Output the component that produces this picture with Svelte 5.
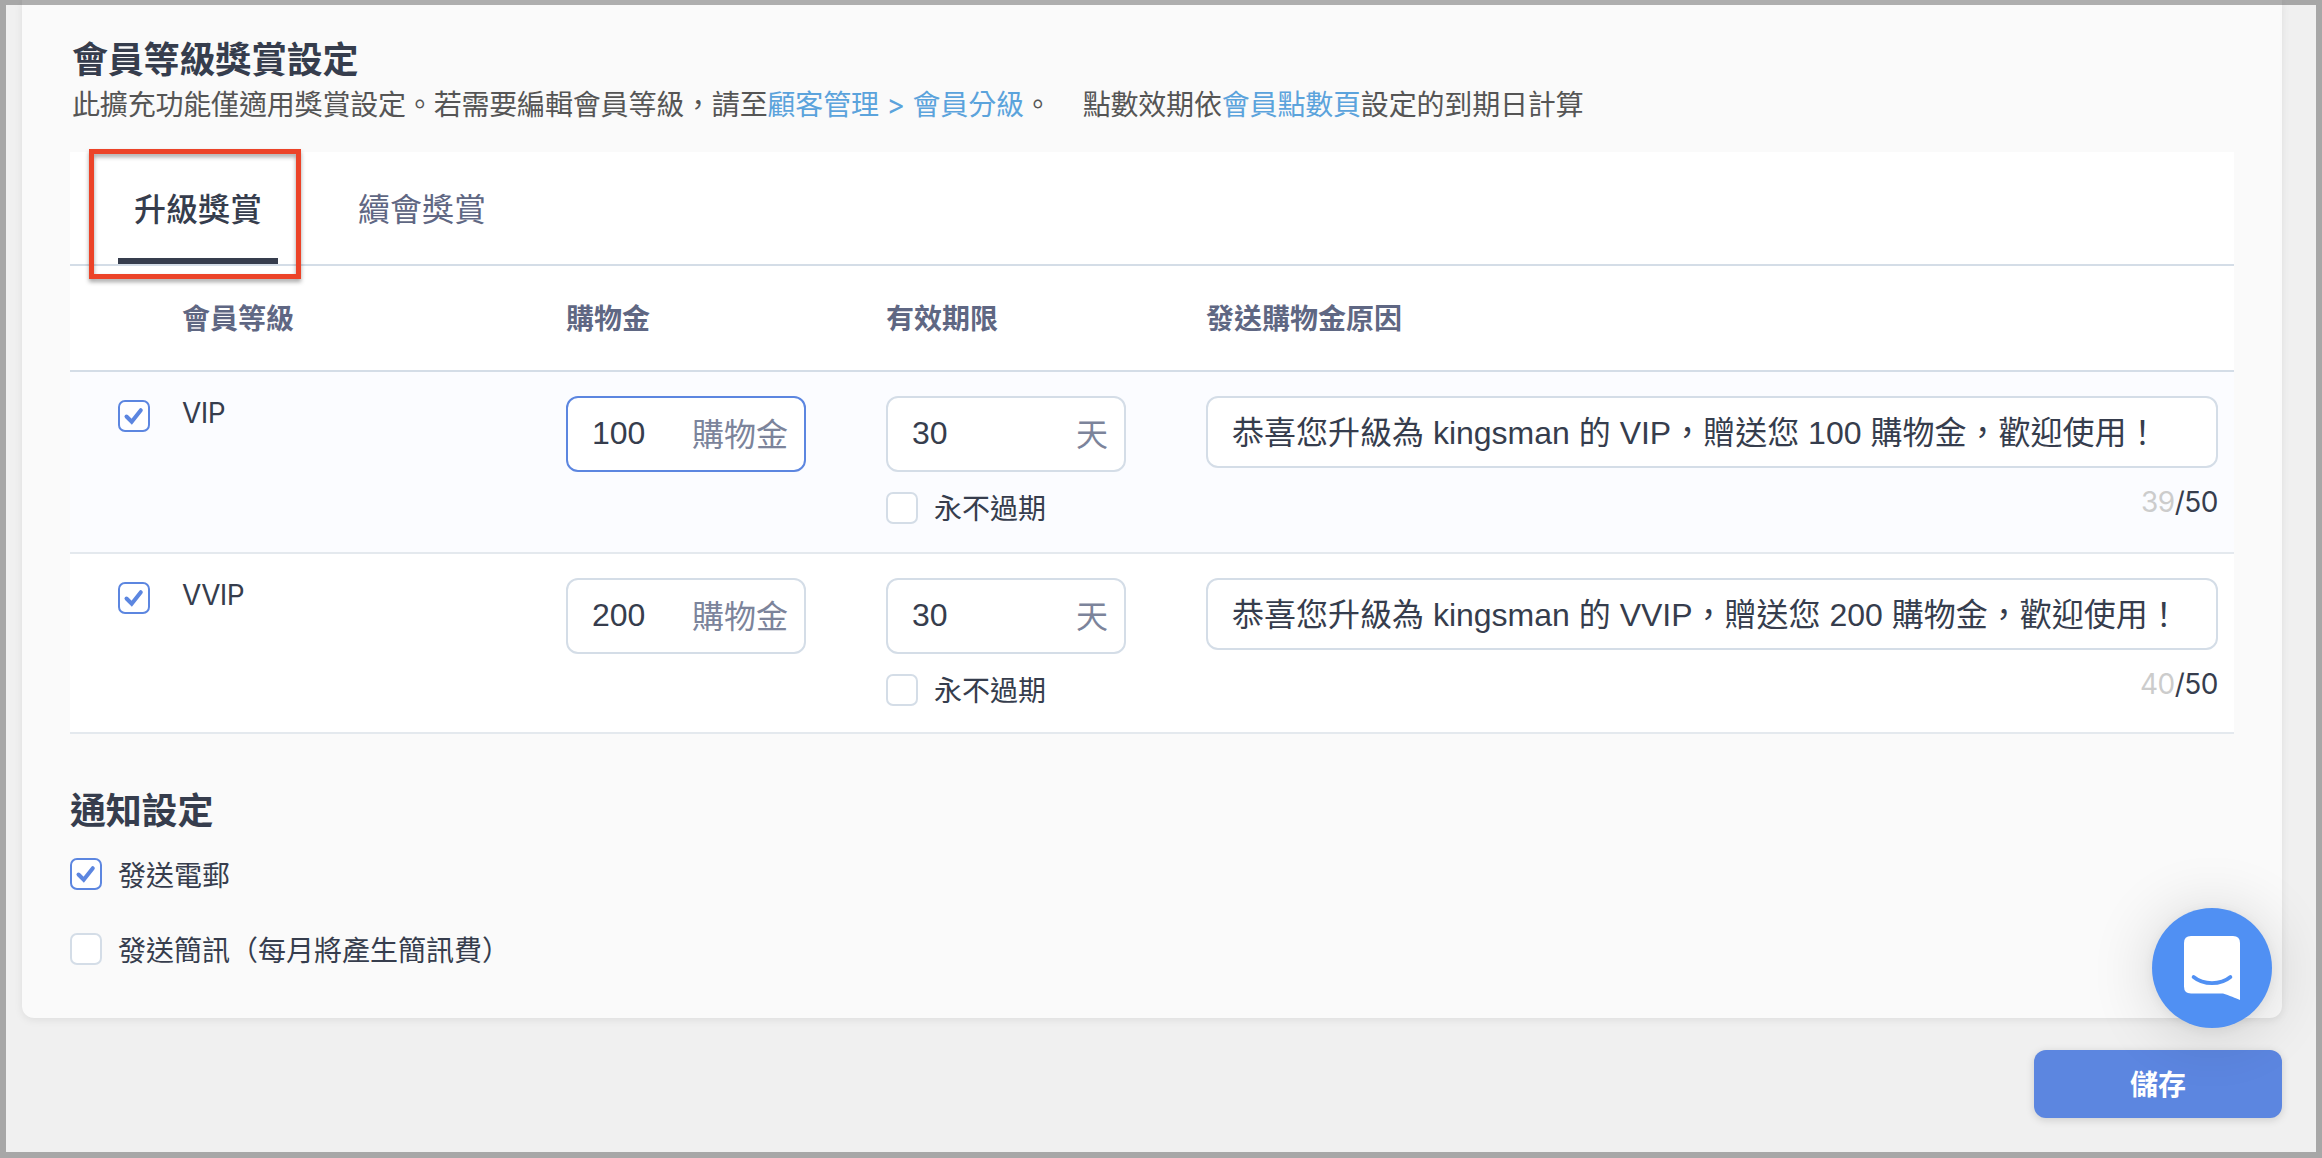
<script lang="ts">
	let activeTab = 'upgrade';

	const tabs = [
		{ id: 'upgrade', label: '升級獎賞' },
		{ id: 'renew', label: '續會獎賞' }
	];

	let levels = [
		{
			name: 'VIP',
			enabled: true,
			credit: '100',
			days: '30',
			neverExpire: false,
			reason: '恭喜您升級為 kingsman 的 VIP，贈送您 100 購物金，歡迎使用！',
			count: 39,
			active: true
		},
		{
			name: 'VVIP',
			enabled: true,
			credit: '200',
			days: '30',
			neverExpire: false,
			reason: '恭喜您升級為 kingsman 的 VVIP，贈送您 200 購物金，歡迎使用！',
			count: 40,
			active: false
		}
	];

	let notifications = [
		{ label: '發送電郵', checked: true },
		{ label: '發送簡訊（每月將產生簡訊費）', checked: false }
	];
</script>

<div class="page">
	<section class="panel">
		<h2>會員等級獎賞設定</h2>
		<p class="desc">
			此擴充功能僅適用獎賞設定。若需要編輯會員等級，請至<a href="#members">顧客管理 &gt; 會員分級</a>。<span class="note">點數效期依<a href="#points">會員點數頁</a>設定的到期日計算</span>
		</p>

		<div class="table">
			<div class="tabs">
				{#each tabs as tab}
					<button class="tab" class:active={activeTab === tab.id} on:click={() => (activeTab = tab.id)}>
						{tab.label}
					</button>
				{/each}
				<div class="highlight"></div>
			</div>

			<div class="row head">
				<div></div>
				<div>會員等級</div>
				<div>購物金</div>
				<div>有效期限</div>
				<div>發送購物金原因</div>
			</div>

			{#each levels as level}
				<div class="row level" class:current={level.active}>
					<label class="check first">
						<input type="checkbox" bind:checked={level.enabled} />
						<span class="box">
							{#if level.enabled}
								<svg viewBox="0 0 32 32"><path d="M8.5 16.5L13.7 21.7L22.8 10.2" /></svg>
							{/if}
						</span>
					</label>
					<div class="name">{level.name}</div>
					<div>
						<div class="field" class:focused={level.active}>
							<input type="text" bind:value={level.credit} />
							<span class="unit">購物金</span>
						</div>
					</div>
					<div>
						<div class="field">
							<input type="text" bind:value={level.days} />
							<span class="unit">天</span>
						</div>
						<label class="check never">
							<input type="checkbox" bind:checked={level.neverExpire} />
							<span class="box">
								{#if level.neverExpire}
									<svg viewBox="0 0 32 32"><path d="M8.5 16.5L13.7 21.7L22.8 10.2" /></svg>
								{/if}
							</span>
							<span class="label">永不過期</span>
						</label>
					</div>
					<div>
						<div class="field reason">
							<input type="text" bind:value={level.reason} />
						</div>
						<div class="counter"><span>{level.count}</span>/50</div>
					</div>
				</div>
			{/each}
		</div>

		<h2 class="notify-title">通知設定</h2>
		<div class="notify">
			{#each notifications as item}
				<label class="check">
					<input type="checkbox" bind:checked={item.checked} />
					<span class="box">
						{#if item.checked}
							<svg viewBox="0 0 32 32"><path d="M8.5 16.5L13.7 21.7L22.8 10.2" /></svg>
						{/if}
					</span>
					<span>{item.label}</span>
				</label>
			{/each}
		</div>
	</section>

	<div class="actions">
		<button class="save">儲存</button>
	</div>

	<button class="chat" aria-label="chat">
		<svg viewBox="0 0 56 64">
			<path d="M7 0H49Q56 0 56 7V64C52 62.3 45 59.5 39 57.5H7Q0 57.5 0 50.5V7Q0 0 7 0Z" fill="#fff" />
			<path d="M9.6 41C19.5 49.2 36.5 49.2 46.4 41" fill="none" stroke="#5090f3" stroke-width="3.8" stroke-linecap="round" />
		</svg>
	</button>

	<div class="frame"></div>
</div>

<style>
	:global(body) {
		background: #f0f0f0;
	}

	.page {
		position: relative;
		box-sizing: border-box;
		width: 2322px;
		height: 1158px;
		padding: 0 40px 0 22px;
		overflow: hidden;
		background: #f0f0f0;
		color: #363d4d;
		font-family: Inter, 'Noto Sans CJK TC', sans-serif;
		font-size: 28px;
	}

	.page * {
		box-sizing: border-box;
	}

	/* Dark edge lying over the whole page */
	.frame {
		position: absolute;
		inset: 0;
		border: 6px solid rgba(0, 0, 0, 0.3);
		border-top-width: 5px;
		pointer-events: none;
	}

	.panel {
		height: 1018px;
		padding: 37px 48px 0;
		background: #fafafa;
		border-radius: 0 0 12px 12px;
		box-shadow: 0 2px 8px rgba(0, 0, 0, 0.08);
	}

	h2 {
		margin: 0 0 0 2px;
		font-size: 36px;
		line-height: 46px;
		font-weight: 600;
		letter-spacing: -0.2px;
	}

	.desc {
		margin: 2px 0 0 2px;
		height: 67px;
		line-height: 40px;
		color: #555;
		letter-spacing: -0.18px;
		white-space: nowrap;
	}

	.desc a {
		color: #5ba3dc;
		text-decoration: none;
	}

	.note {
		margin-left: 31px;
	}

	.table {
		width: 2164px;
		background: #fff;
	}

	.tabs {
		position: relative;
		display: flex;
		gap: 64px;
		height: 114px;
		padding-left: 48px;
		border-bottom: 2px solid #d4dde7;
	}

	.tab {
		width: 160px;
		padding: 3px 0 0;
		border: none;
		border-bottom: 6px solid transparent;
		background: none;
		color: #5f6783;
		font-family: inherit;
		font-size: 32px;
		white-space: nowrap;
		cursor: pointer;
	}

	.tab.active {
		color: #363d4d;
		border-bottom-color: #363d4d;
		font-weight: 500;
	}

	.highlight {
		position: absolute;
		left: 19px;
		top: -3px;
		width: 212px;
		height: 130px;
		border: 5px solid #ec4328;
		filter: drop-shadow(0 3px 2px rgba(0, 0, 0, 0.35));
		pointer-events: none;
	}

	.row {
		display: grid;
		grid-template-columns: 64px 384px 320px 320px 1012px;
		padding-left: 48px;
	}

	.head {
		height: 106px;
		padding-bottom: 3px;
		align-items: center;
		border-bottom: 2px solid #d4dde7;
		color: #5f6783;
		font-weight: 600;
	}

	.level {
		height: 180px;
		padding-top: 24px;
		border-bottom: 2px solid #e4e9ee;
	}

	.level.current {
		height: 182px;
		background: #fbfcff;
	}

	.name {
		line-height: 34px;
		letter-spacing: -0.6px;
	}

	.field {
		display: flex;
		align-items: center;
		width: 240px;
		height: 76px;
		padding: 0 16px 0 24px;
		border: 2px solid #d4dde7;
		border-radius: 12px;
		background: #fff;
	}

	.field.focused {
		border-color: #5c86e0;
	}

	.field input {
		flex: 1;
		min-width: 0;
		height: 70px;
		padding: 0 0 2px;
		border: none;
		outline: none;
		background: none;
		color: #363d4d;
		font-family: 'Liberation Sans', 'Noto Sans CJK TC', sans-serif;
		font-size: 32px;
	}

	.field.reason {
		width: 100%;
		height: 72px;
	}

	.field.reason input {
		height: 66px;
		padding-bottom: 5px;
	}

	.unit {
		padding-bottom: 5px;
		color: #7c849b;
		font-size: 32px;
	}

	.check {
		display: flex;
		align-items: center;
		gap: 16px;
		height: 32px;
		white-space: nowrap;
	}

	.check input {
		display: none;
	}

	.check.first {
		margin-top: 4px;
	}

	.check.never {
		margin-top: 20px;
	}

	.label {
		padding-bottom: 2px;
	}

	.box {
		width: 32px;
		height: 32px;
		border: 2px solid #d4dde7;
		border-radius: 7px;
		background: #fff;
	}

	.check input:checked + .box {
		border-color: #5c86e0;
	}

	.box svg {
		display: block;
		width: 32px;
		height: 32px;
		margin: -2px;
		fill: none;
		stroke: #5c86e0;
		stroke-width: 4;
		stroke-linecap: round;
	}

	.counter {
		margin-top: 17px;
		line-height: 34px;
		letter-spacing: -0.5px;
		text-align: right;
	}

	.counter span {
		color: #ccc;
	}

	.notify-title {
		margin: 54px 0 0;
	}

	.notify {
		display: flex;
		flex-direction: column;
		gap: 43px;
		margin-top: 24px;
	}

	.actions {
		display: flex;
		justify-content: flex-end;
		margin-top: 32px;
	}

	.save {
		width: 248px;
		height: 68px;
		padding: 0 0 3px;
		border: none;
		border-radius: 12px;
		background: #5c86e0;
		box-shadow: 0 2px 8px rgba(0, 0, 0, 0.15);
		color: #fff;
		font-family: inherit;
		font-size: 28px;
		font-weight: 600;
		cursor: pointer;
	}

	.chat {
		position: absolute;
		right: 50px;
		bottom: 130px;
		display: flex;
		align-items: center;
		justify-content: center;
		width: 120px;
		height: 120px;
		padding: 0;
		border: none;
		border-radius: 50%;
		background: #5090f3;
		box-shadow: 0 2px 12px rgba(0, 0, 0, 0.06), 0 4px 64px rgba(0, 0, 0, 0.16);
		cursor: pointer;
	}

	.chat svg {
		width: 56px;
		height: 64px;
	}
</style>
